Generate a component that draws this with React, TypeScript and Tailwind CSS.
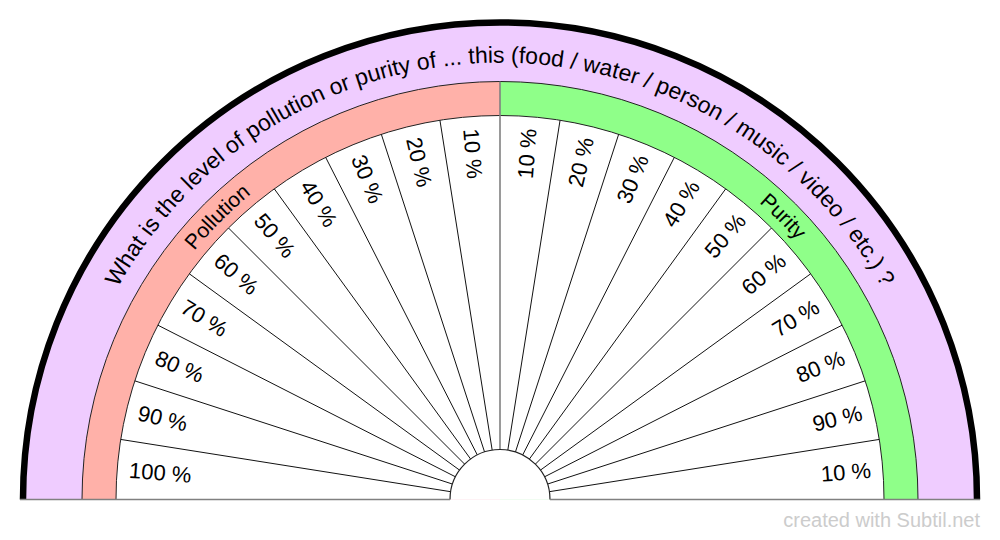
const CX = 500
const CY = 499.5

const rad = (d: number) => (d * Math.PI) / 180
const pt = (r: number, deg: number) => [CX + r * Math.cos(rad(deg)), CY - r * Math.sin(rad(deg))]

const arc = (r: number) => `M ${CX - r} ${CY} A ${r} ${r} 0 0 1 ${CX + r} ${CY}`

// sectors counted from the baseline upwards
const leftLabels = ['100 %', '90 %', '80 %', '70 %', '60 %', '50 %', '40 %', '30 %', '20 %', '10 %']
const rightLabels = ['10 %', '90 %', '80 %', '70 %', '60 %', '50 %', '40 %', '30 %', '20 %', '10 %']

const Pendulum = () => {
  const spokes = [1, 2, 3, 4, 5, 6, 7, 8, 9].flatMap((i) => [9 * i, 180 - 9 * i])

  return (
    <svg width={1000} height={502} viewBox="0 0 1000 502" className="block">
      <defs>
        <path id="titleArc" d={arc(437)} />
        <path id="bandArc" d={arc(394)} />
      </defs>

      <path d={`${arc(477)} Z`} fill="#efccff" />
      <path d={`M ${CX - 418} ${CY} A 418 418 0 0 1 ${CX} ${CY - 418} L ${CX} ${CY} Z`} fill="#ffb1a9" />
      <path d={`M ${CX} ${CY - 418} A 418 418 0 0 1 ${CX + 418} ${CY} L ${CX} ${CY} Z`} fill="#8fff89" />
      <path d={arc(418)} fill="none" stroke="#222" strokeWidth={1} />
      <path d={`${arc(384)} Z`} fill="#fff" />
      <path d={arc(384)} fill="none" stroke="#222" strokeWidth={1} />

      {spokes.map((a) => {
        const [x1, y1] = pt(50, a)
        const [x2, y2] = pt(384, a)
        return <line key={a} x1={x1} y1={y1} x2={x2} y2={y2} stroke="#111" strokeWidth={1} />
      })}
      <line x1={CX} y1={CY - 418} x2={CX} y2={CY - 50} stroke="#808080" strokeWidth={1.6} />

      <path d={`${arc(50)} Z`} fill="#fff" />
      <path d={arc(50)} fill="none" stroke="#222" strokeWidth={1.2} />

      <path d={arc(477)} fill="none" stroke="#000" strokeWidth={6.5} />
      <line x1={20} y1={CY} x2={450} y2={CY} stroke="#808080" strokeWidth={1.6} />
      <line x1={550} y1={CY} x2={980} y2={CY} stroke="#808080" strokeWidth={1.6} />

      <text fontSize={23} fill="#000">
        <textPath href="#titleArc" startOffset="50%" textAnchor="middle">
          What is the level of pollution or purity of ... this (food / water / person / music / video / etc.) ?
        </textPath>
      </text>
      <text fontSize={21} fill="#000">
        <textPath href="#bandArc" startOffset="25%" textAnchor="middle">
          Pollution
        </textPath>
      </text>
      <text fontSize={21} fill="#000">
        <textPath href="#bandArc" startOffset="75%" textAnchor="middle">
          Purity
        </textPath>
      </text>

      {leftLabels.map((label, k) => {
        const t = 4.5 + 9 * k
        const [x, y] = pt(372, 180 - t)
        return (
          <text
            key={'l' + k}
            x={x}
            y={y}
            fontSize={22}
            fill="#000"
            textAnchor="start"
            dominantBaseline="central"
            transform={`rotate(${t} ${x} ${y})`}
          >
            {label}
          </text>
        )
      })}
      {rightLabels.map((label, k) => {
        const t = 4.5 + 9 * k
        const [x, y] = pt(372, t)
        return (
          <text
            key={'r' + k}
            x={x}
            y={y}
            fontSize={22}
            fill="#000"
            textAnchor="end"
            dominantBaseline="central"
            transform={`rotate(${-t} ${x} ${y})`}
          >
            {label}
          </text>
        )
      })}
    </svg>
  )
}

export default function App() {
  return (
    <div className="w-[1000px] h-[540px] bg-white overflow-hidden flex flex-col font-['Liberation_Sans',Arial,sans-serif]">
      <Pendulum />
      <div className="mt-[8px] pr-[20px] flex justify-end text-[20px] leading-5 text-[#cccccc]">
        created with Subtil.net
      </div>
    </div>
  )
}
